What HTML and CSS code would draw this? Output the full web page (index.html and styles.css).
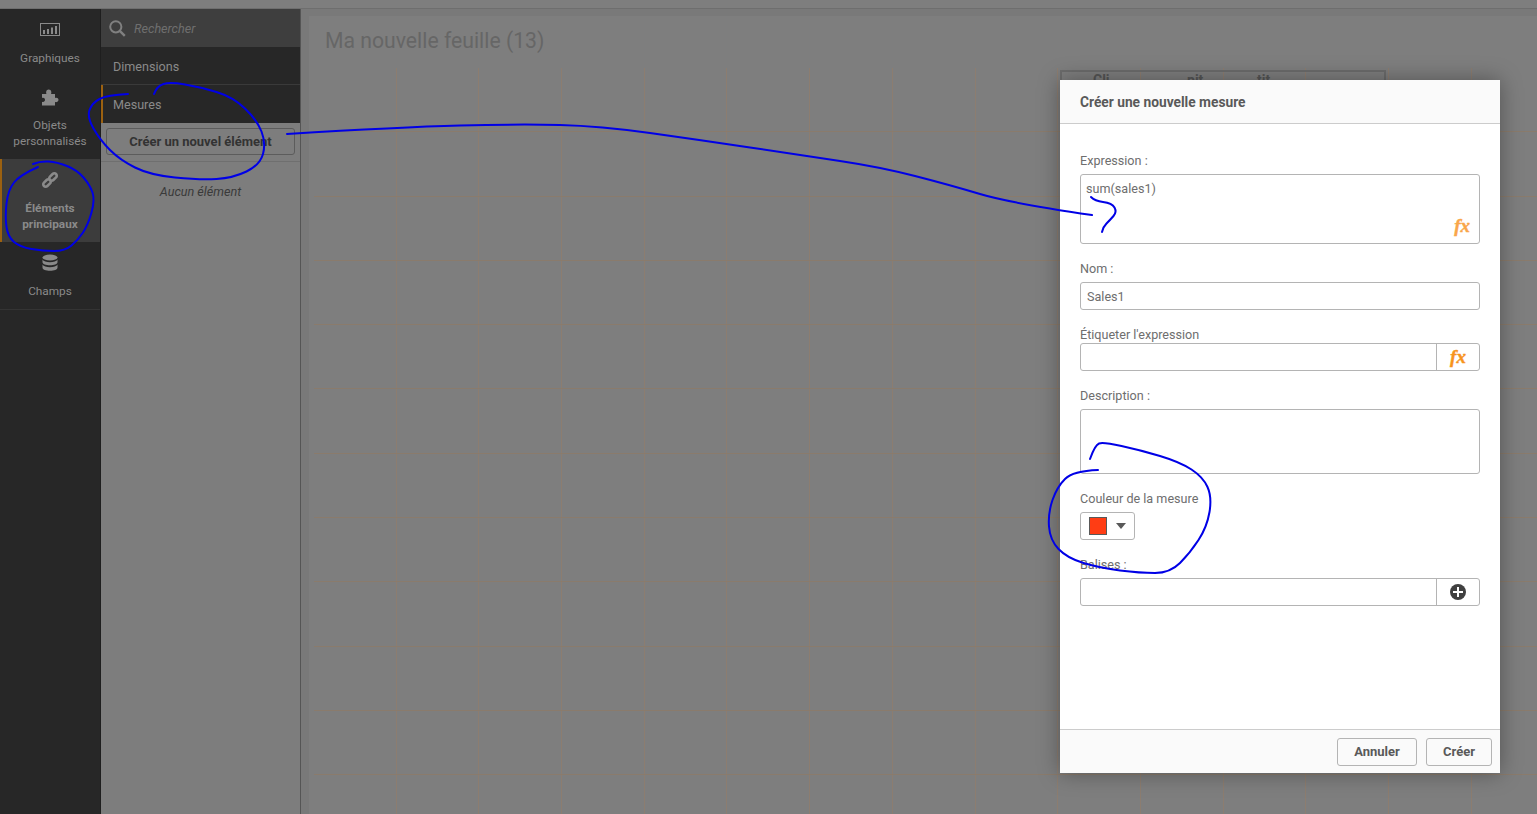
FILE: index.html
```html
<!DOCTYPE html>
<html lang="fr">
<head>
<meta charset="utf-8">
<title>Créer une nouvelle mesure</title>
<link rel="stylesheet" href="styles.css">
</head>
<body>
<div class="app">
  <div class="topbar"></div>
  <div class="main">
    <nav class="rail">
      <div class="rail-item">
        <svg class="rail-icon" viewBox="0 0 20 18" width="20" height="18"><rect x="0.5" y="2.5" width="19" height="12" fill="none" stroke="#8a8a8a"/><path d="M3 9h2v4H3zM7 8h2v5H7zM11 6.500h2V13h-2zM15 5h2v8h-2z" fill="#8a8a8a"/></svg>
        <span>Graphiques</span>
      </div>
      <div class="rail-item">
        <svg class="rail-icon" viewBox="0 0 18 18" width="18" height="18"><path d="M1 6h4.500C4.800 4.500 5 1.500 7.700 1.500S10.800 4.500 10 6h4v4c1.500-.7 3.500-.2 3.500 1.800S15.500 14.500 14 14v3.500H1v-3.800c1.500.7 3-.2 3-1.900S2.500 9.400 1 10z" fill="#8a8a8a"/></svg>
        <span>Objets<br>personnalisés</span>
      </div>
      <div class="rail-item active">
        <svg class="rail-icon" viewBox="0 0 18 18" width="18" height="18"><g fill="none" stroke="#8a8a8a" stroke-width="2.600"><rect x="-4.300" y="-2.400" width="8.600" height="4.800" rx="2.400" transform="translate(12 6) rotate(-45)"/><rect x="-4.300" y="-2.400" width="8.600" height="4.800" rx="2.400" transform="translate(6 12) rotate(-45)"/></g></svg>
        <span>Éléments<br>principaux</span>
      </div>
      <div class="rail-item last">
        <svg class="rail-icon" viewBox="0 0 18 18" width="18" height="18"><g fill="#8a8a8a"><ellipse cx="9" cy="3.500" rx="7.500" ry="3"/><path d="M1.500 5.500c1 1.800 4 2.700 7.500 2.700s6.500-.9 7.500-2.700v2.700c0 1.700-3.400 3-7.500 3s-7.500-1.300-7.500-3z"/><path d="M1.500 10.500c1 1.800 4 2.700 7.500 2.700s6.500-.9 7.500-2.700v3.200c0 1.700-3.400 3-7.500 3s-7.500-1.300-7.500-3z"/></g></svg>
        <span>Champs</span>
      </div>
    </nav>
    <aside class="panel">
      <div class="search">
        <svg viewBox="0 0 17 17" width="17" height="17"><circle cx="6.800" cy="6.800" r="5.600" fill="none" stroke="#808080" stroke-width="2"/><path d="M10.800 10.800l5 5" stroke="#808080" stroke-width="2.400"/></svg>
        <span>Rechercher</span>
      </div>
      <div class="cat first">Dimensions</div>
      <div class="cat selected">Mesures</div>
      <div class="create-row"><div class="create-btn">Créer un nouvel élément</div></div>
      <div class="empty">Aucun élément</div>
    </aside>
    <section class="canvas">
      <h1 class="sheet-title">Ma nouvelle feuille (13)</h1>
      <div class="grid">
        <div class="vlines"><i></i><i></i><i></i><i></i><i></i><i></i><i></i><i></i><i></i><i></i><i></i><i></i><i></i><i></i></div>
        <div class="hlines"><i></i><i></i><i></i><i></i><i></i><i></i><i></i><i></i><i></i><i></i><i></i></div>
        <div class="widget"><span>Cli</span><span>pit</span><span>tit</span></div>
      </div>
    </section>
  </div>
</div>

<div class="dialog">
  <header class="dlg-head">Créer une nouvelle mesure</header>
  <div class="dlg-body">
    <div class="field">
      <label>Expression :</label>
      <div class="box area-expr"><span class="expr">sum(sales1)</span><span class="fx fx-in">fx</span></div>
    </div>
    <div class="field">
      <label>Nom :</label>
      <div class="box line"><span class="val">Sales1</span></div>
    </div>
    <div class="field">
      <label class="tight">Étiqueter l'expression</label>
      <div class="box line split"><span class="grow"></span><span class="addon"><span class="fx">fx</span></span></div>
    </div>
    <div class="field">
      <label>Description :</label>
      <div class="box area-desc"></div>
    </div>
    <div class="field">
      <label>Couleur de la mesure</label>
      <div class="box color-btn"><span class="swatch"></span><span class="caret"></span></div>
    </div>
    <div class="field">
      <label>Balises :</label>
      <div class="box line split"><span class="grow"></span><span class="addon"><svg viewBox="0 0 16 16" width="16" height="16"><circle cx="8" cy="8" r="8" fill="#404040"/><path d="M8 3v10M3 8h10" stroke="#fff" stroke-width="2"/></svg></span></div>
    </div>
  </div>
  <footer class="dlg-foot">
    <div class="btn annuler">Annuler</div>
    <div class="btn creer">Créer</div>
  </footer>
</div>

<svg class="ink" viewBox="0 0 1537 814" width="1537" height="814">
  <path d="M33 164Q40 161 48.500 161.500Q57 162 67 166Q77 170 83.500 177.500Q90 185 92.500 192.500Q95 200 91.500 212.500Q88 225 83 232.500Q78 240 71.500 245.500Q65 251 54 251Q43 251 31.500 249Q20 247 14 242Q8 237 6.500 227Q5 217 6.500 203.500Q8 190 14 182.500Q20 175 38 167"/>
  <path d="M154 94Q157 86 163.500 84Q170 82 185 84.500Q200 87 216.500 92Q233 97 245 108.500Q257 120 261.500 131.500Q266 143 263 154Q260 165 246.500 171.500Q233 178 216.500 179Q200 180 175 177.500Q150 175 135 167.500Q120 160 110 150Q100 140 93.500 128.500Q87 117 89.500 110Q92 103 99.500 99Q107 95 128 94"/>
  <path d="M287 134Q400 127 460 125.500Q520 124 560 125Q600 126 650 133Q700 140 750 147.500Q800 155 840 161Q880 167 915 176Q950 185 980 194Q1010 203 1092 215"/>
  <path d="M1091 197Q1095 201 1103 202Q1112 203 1114.500 207.500Q1117 212 1113.500 216Q1110 220 1106.500 223.500Q1103 227 1102 232"/>
  <path d="M1090 459Q1095 445 1099 443.500Q1103 442 1121.500 446Q1140 450 1160 456Q1180 462 1191.500 469.500Q1203 477 1207.500 487Q1212 497 1209.500 512Q1207 527 1198.500 540Q1190 553 1180 563Q1170 573 1155 573Q1140 573 1120 570.500Q1100 568 1083.500 563Q1067 558 1058.500 549Q1050 540 1049 526.500Q1048 513 1052.500 500Q1057 487 1065 479Q1073 471 1098 470"/>
</svg>
</body>
</html>
```
FILE: styles.css
```css
* { box-sizing: border-box; }
html, body { margin: 0; height: 100%; overflow: hidden; }
body { font-family: Roboto, "Liberation Sans", sans-serif; font-size: 12.600px; background: #7e7e7e; color: #595959; }

.app { display: flex; flex-direction: column; height: 814px; }
.topbar { height: 9px; flex: none; background: #7e7e7e; border-bottom: 1px solid #6e6e6e; }
.main { flex: 1; display: flex; min-height: 0; }

.rail { width: 101px; flex: none; background: #272727; border-right: 1px solid #1e1e1e; color: #8a8a8a; text-align: center; line-height: 16px; font-size: 11.800px; }
.rail-item { display: flex; flex-direction: column; align-items: center; gap: 11px; padding: 12px 0 10px; }
.rail-icon { display: block; }
.rail-item.active { background: #3c3c3c; border-left: 2px solid #9c6110; font-weight: 700; padding-right: 2px; }
.rail-item.last { border-bottom: 1px solid #343434; }

.panel { width: 200px; flex: none; background: #7d7d7d; border-right: 1px solid #555; display: flex; flex-direction: column; }
.search { height: 38px; flex: none; background: #3e3e3e; display: flex; align-items: center; gap: 8px; padding-left: 8px; font-style: italic; color: #6e6e6e; }
.cat { height: 38px; flex: none; background: #272727; border-bottom: 1px solid #3a3a3a; padding-left: 12px; display: flex; align-items: center; color: #8a8a8a; }
.cat.first { padding-top: 1px; }
.cat.selected { border-left: 2px solid #9c6110; padding-left: 10px; border-bottom: 0; }
.create-row { padding: 5px 5px 6px 5px; border-bottom: 1px solid #6f6f6f; }
.create-btn { height: 27px; border: 1px solid #5c5c5c; border-radius: 3px; display: flex; align-items: center; justify-content: center; font-weight: 700; color: #333; font-size: 13px; }
.empty { margin-top: 22px; text-align: center; font-style: italic; color: #3a3a3a; line-height: 16px; }

.canvas { flex: 1; min-width: 0; background: #797979; padding: 7px 0 0 8px; display: flex; flex-direction: column; }
.sheet-title { margin: 0; padding: 9px 0 0 16px; height: 52px; background: #7e7e7e; font-size: 21.200px; font-weight: 400; line-height: 32px; color: #666; flex: none; }
.grid { flex: 1; position: relative; background: #7e7e7e; }
.vlines { position: absolute; left: 5px; top: 0; bottom: 0; display: flex; }
.vlines i { flex: none; width: 82.700px; border-right: 1px solid #8c7d70; }
.hlines { position: absolute; left: 5px; right: 0; top: 0; display: flex; flex-direction: column; }
.hlines i { flex: none; height: 64.300px; border-bottom: 1px solid #8a7b6c; }
.widget { position: absolute; left: 751px; top: 2px; width: 326px; height: 60px; border: 2px solid #6c6c6c; display: grid; grid-template-columns: 94px 70px auto; padding-left: 31px; font-weight: 700; font-size: 14px; color: #555; }

.dialog { position: absolute; left: 1060px; top: 80px; width: 440px; height: 693px; background: #fff; border-radius: 2px; box-shadow: 0 0 22px rgba(0,0,0,.35); display: flex; flex-direction: column; }
.dlg-head { height: 44px; flex: none; background: #fafafa; border-bottom: 1px solid #ccc; padding-left: 20px; display: flex; align-items: center; font-weight: 700; color: #595959; font-size: 13.750px; }
.dlg-body { flex: 1; padding: 28px 20px 0; }
.field { margin-bottom: 16px; }
.field label { display: block; line-height: 16px; padding-top: 1px; height: 17px; margin-bottom: 5px; color: #6e6e6e; }
.field label.tight { margin-bottom: 0; }
.box { border: 1px solid #b4b4b4; border-radius: 3px; background: #fff; }
.area-expr { height: 70px; position: relative; padding: 6px 5px; line-height: 16px; }
.expr { color: #6e6e6e; }
.area-desc { height: 65px; }
.line { height: 28px; display: flex; align-items: center; padding-left: 6px; }
.val { color: #6e6e6e; }
.split { padding-left: 0; }
.grow { flex: 1; }
.addon { width: 43px; height: 100%; border-left: 1px solid #b4b4b4; display: flex; align-items: center; justify-content: center; }
.fx { font-family: "Liberation Serif", serif; font-style: italic; font-weight: 700; font-size: 19px; line-height: 18px; color: #f7941d; -webkit-text-stroke: 0.4px currentColor; }
.fx-in { position: absolute; right: 9px; bottom: 8px; color: #f9a64a; }
.color-btn { width: 55px; height: 28px; display: flex; align-items: center; padding-left: 8px; gap: 9px; }
.swatch { width: 18px; height: 18px; background: #ff3d14; border: 1px solid #595959; }
.caret { width: 0; height: 0; border-left: 5px solid transparent; border-right: 5px solid transparent; border-top: 6px solid #595959; }

.dlg-foot { height: 44px; flex: none; background: #fafafa; border-top: 1px solid #ccc; display: flex; justify-content: flex-end; align-items: center; gap: 9px; padding: 0 8px 0 0; }
.btn { height: 28px; border: 1px solid #b4b4b4; border-radius: 3px; display: flex; align-items: center; justify-content: center; font-weight: 700; color: #595959; font-size: 13px; }
.annuler { width: 80px; }
.creer { width: 66px; }

.ink { position: absolute; left: 0; top: 0; pointer-events: none; fill: none; stroke: #0000e6; stroke-width: 2; stroke-linecap: round; }
```
